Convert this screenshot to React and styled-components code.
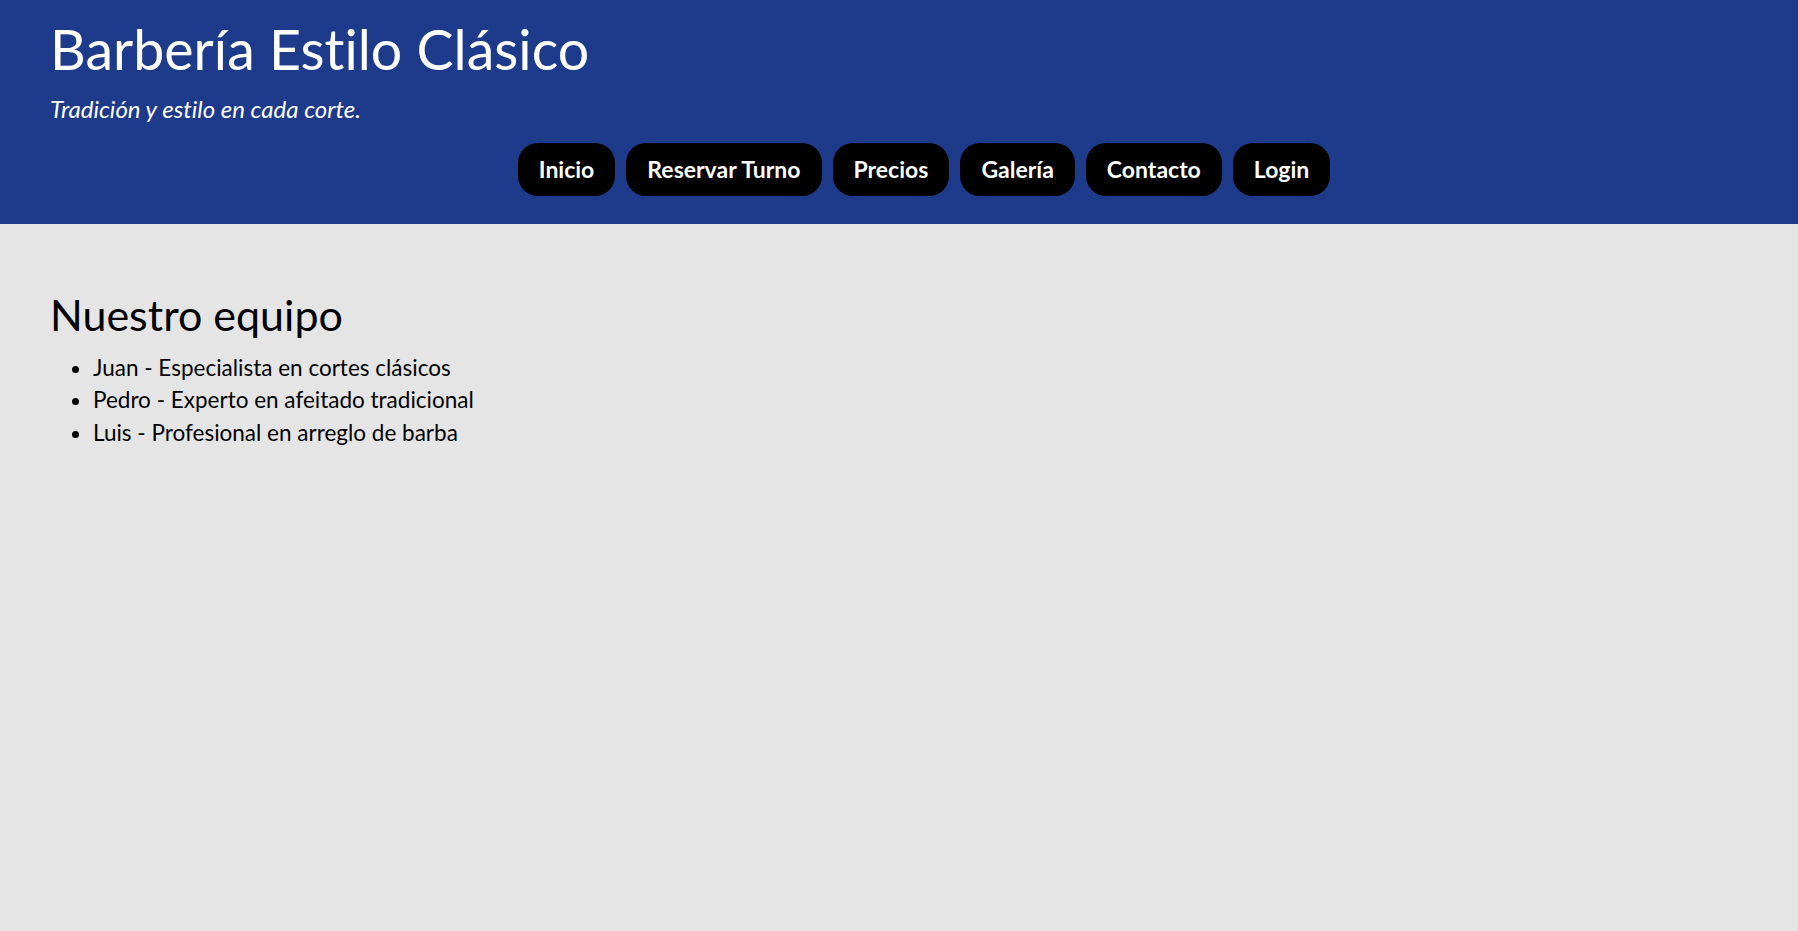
import styled, { createGlobalStyle } from "styled-components";

const GlobalStyle = createGlobalStyle`
  html, body {
    margin: 0;
    padding: 0;
    background: #e5e5e5;
  }
  body {
    font-family: "Trebuchet MS", Lato, sans-serif;
    font-variant-ligatures: none;
    color: #000;
  }
`;

const Header = styled.header`
  background: #1e3a8a;
  color: #fff;
  padding: 16px 0 28px 50px;
  display: flex;
  flex-direction: column;
`;

const Title = styled.h1`
  margin: 0;
  font-size: 55.5px;
  font-weight: 400;
  line-height: 1.2;
`;

const Tagline = styled.p`
  margin: 12px 0 0;
  font-size: 24px;
  font-style: italic;
  line-height: 1.2;
`;

const Nav = styled.nav`
  margin-top: 20px;
  display: flex;
  justify-content: center;
  gap: 11px;
`;

const NavButton = styled.a`
  background: #000;
  color: #fff;
  font-size: 23px;
  font-weight: 700;
  line-height: 23px;
  padding: 15px 21px;
  border-radius: 20px;
  text-decoration: none;
  cursor: pointer;
`;

const Main = styled.main`
  padding: 0 50px;
`;

const SectionTitle = styled.h2`
  margin: 65px 0 11px;
  font-size: 43px;
  font-weight: 400;
  line-height: 1.2;
`;

const TeamList = styled.ul`
  margin: 0;
  padding-left: 43px;
  font-size: 22.5px;
  line-height: 32.5px;
`;

const links = ["Inicio", "Reservar Turno", "Precios", "Galería", "Contacto", "Login"];

const team = [
  "Juan - Especialista en cortes clásicos",
  "Pedro - Experto en afeitado tradicional",
  "Luis - Profesional en arreglo de barba",
];

const App = () => {
  return (
    <>
      <GlobalStyle />
      <Header>
        <Title>{"Barbería Estilo Clásico"}</Title>
        <Tagline>{"Tradición y estilo en cada corte."}</Tagline>
        <Nav>
          {links.map((l) => (
            <NavButton key={l}>{l}</NavButton>
          ))}
        </Nav>
      </Header>
      <Main>
        <SectionTitle>{"Nuestro equipo"}</SectionTitle>
        <TeamList>
          {team.map((t) => (
            <li key={t}>{t}</li>
          ))}
        </TeamList>
      </Main>
    </>
  );
};

export default App;
